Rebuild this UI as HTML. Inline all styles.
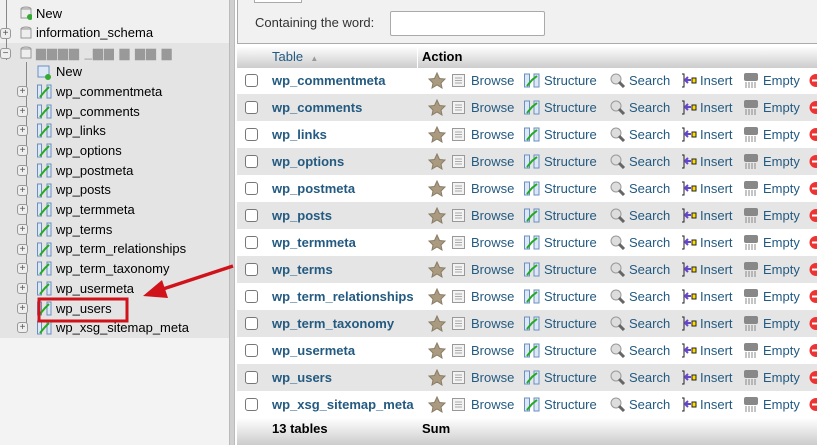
<!DOCTYPE html><html><head><style>
*{margin:0;padding:0;box-sizing:border-box}
body{width:817px;height:445px;overflow:hidden;font-family:"Liberation Sans",Arial,sans-serif;font-size:13px;position:relative;background:#fff}
#left{position:absolute;left:0;top:0;width:229px;height:445px;background:#f3f3f3}
#left .db{position:absolute;left:0;top:43px;width:229px;height:295px;background:#e4e4e4}
#left .top{position:absolute;left:0;top:0;width:229px;height:43px;background:#f0f0f0}
.li{position:absolute;font-size:13px;color:#000;white-space:nowrap}
.vl{position:absolute;border-left:1px solid #888}
.pl{position:absolute;width:11px;height:11px;border:1px solid #999;border-radius:3px;background:#eee;font-size:10px;line-height:9px;text-align:center;color:#555}
.ic{position:absolute;width:12px;height:13px}
#div{position:absolute;left:229px;top:0;width:6px;height:445px;background:#d0d0d0;border-left:1px solid #bbb;border-right:1px solid #bbb}
#right{position:absolute;left:235px;top:0;width:582px;height:445px;background:#fff}
.filt{position:absolute;left:2px;top:-2px;width:600px;height:46px;background:#f1f1f1;border:1px solid #aaa}
.row{position:absolute;left:2px;width:600px;height:27px}
.g{background:#e5e5e5}
.cb{position:absolute;left:8px;top:7px;width:13px;height:13px;border:1px solid #777;border-radius:3px;background:#fff}
.tn{position:absolute;left:35px;top:6px;color:#235a81;font-weight:bold;font-size:13px}
.a{position:absolute;top:6px;color:#235a81;font-size:13px}
.hdr{position:absolute;left:2px;top:46px;width:600px;height:22px;background:linear-gradient(#fff,#ccc)}
.ftr{position:absolute;left:2px;top:418px;width:600px;height:27px;background:linear-gradient(#fff,#ccc)}
</style></head><body>
<div id="left"><div class="top"></div><div class="db"></div>
<div class="vl" style="left:6px;top:0;height:60px"></div>
<div class="vl" style="left:26px;top:62px;height:270px"></div>
<div class="li" style="left:36px;top:6px">New</div>
<div class="li" style="left:36px;top:25px">information_schema</div>
<div class="li" style="left:36px;top:45px;color:#999;letter-spacing:1px">▆▆▆▆ _▆▆ ▆ ▆▆ ▆</div>
<div class="pl" style="left:0;top:28px">+</div><div class="pl" style="left:0;top:48px">−</div>
<svg style="position:absolute;left:20px;top:6px" width="12" height="14"><ellipse cx="6" cy="3" rx="5" ry="2" fill="#ddd" stroke="#999"/><rect x="1" y="3" width="10" height="9" fill="#eee" stroke="#999"/><circle cx="10" cy="11" r="3" fill="#3a3"/></svg>
<svg style="position:absolute;left:20px;top:26px" width="12" height="14"><ellipse cx="6" cy="3" rx="5" ry="2" fill="#ddd" stroke="#999"/><rect x="1" y="3" width="10" height="9" fill="#eee" stroke="#999"/></svg>
<svg style="position:absolute;left:20px;top:46px" width="12" height="14"><ellipse cx="6" cy="3" rx="5" ry="2" fill="#ddd" stroke="#999"/><rect x="1" y="3" width="10" height="9" fill="#eee" stroke="#999"/></svg>
<svg style="position:absolute;left:37px;top:65px" width="14" height="15"><rect x="1" y="1" width="11" height="11" fill="#dde8f6" stroke="#6b8ec0"/><circle cx="11" cy="12" r="3" fill="#3a3"/></svg>
<div class="li" style="left:56px;top:64px">New</div>
<div class="li" style="left:56px;top:84px">wp_commentmeta</div>
<div class="li" style="left:56px;top:104px">wp_comments</div>
<div class="li" style="left:56px;top:123px">wp_links</div>
<div class="li" style="left:56px;top:143px">wp_options</div>
<div class="li" style="left:56px;top:163px">wp_postmeta</div>
<div class="li" style="left:56px;top:182px">wp_posts</div>
<div class="li" style="left:56px;top:202px">wp_termmeta</div>
<div class="li" style="left:56px;top:222px">wp_terms</div>
<div class="li" style="left:56px;top:241px">wp_term_relationships</div>
<div class="li" style="left:56px;top:261px">wp_term_taxonomy</div>
<div class="li" style="left:56px;top:281px">wp_usermeta</div>
<div class="li" style="left:56px;top:301px">wp_users</div>
<div class="li" style="left:56px;top:320px">wp_xsg_sitemap_meta</div>
<div id="pls"></div>
</div>
<div id="div"></div>
<div id="right">
<div class="filt"><div style="position:absolute;left:17px;top:16px;color:#333">Containing the word:</div><div style="position:absolute;left:152px;top:12px;width:155px;height:25px;background:#fff;border:1px solid #aaa;border-radius:2px"></div><div style="position:absolute;left:16px;top:-2px;width:48px;height:6px;background:#fff;border:1px solid #aaa"></div></div>
<div class="hdr"><span style="position:absolute;left:35px;top:3px;color:#235a81">Table &nbsp;<span style="font-size:8px;color:#999">▲</span></span><span style="position:absolute;left:180px;top:0;width:1px;height:22px;background:#fff"></span><span style="position:absolute;left:185px;top:3px;font-weight:bold">Action</span></div>
<div id="rows"></div>
<div class="ftr"><span style="position:absolute;left:35px;top:3px;font-weight:bold">13 tables</span><span style="position:absolute;left:185px;top:3px;font-weight:bold">Sum</span></div>
</div>
<svg style="position:absolute;left:0;top:0" width="817" height="445"><rect x="39" y="299" width="88" height="22" fill="none" stroke="#d0121b" stroke-width="3"/><line x1="233" y1="266" x2="160" y2="290" stroke="#d0121b" stroke-width="3.5"/><polygon points="143,296 162,280 168,298" fill="#d0121b"/></svg>
<script>
var n=["wp_commentmeta","wp_comments","wp_links","wp_options","wp_postmeta","wp_posts","wp_termmeta","wp_terms","wp_term_relationships","wp_term_taxonomy","wp_usermeta","wp_users","wp_xsg_sitemap_meta"],h="",p="";
var ic='<svg style="position:absolute;left:191px;top:5px" width="18" height="17"><polygon points="9,1 11.5,6.5 17,7 13,11 14,16 9,13 4,16 5,11 1,7 6.5,6.5" fill="#a99a80" stroke="#8a7c66"/></svg>'+
'<svg style="position:absolute;left:215px;top:7px" width="14" height="14"><rect x="0.5" y="0.5" width="12" height="12" fill="#f3f3f3" stroke="#999"/><path d="M3 4H10M3 6.5H10M3 9H10" stroke="#aaa"/></svg><span class="a" style="left:234px">Browse</span>'+
'<svg style="position:absolute;left:287px;top:6px" width="16" height="15"><rect x="0.5" y="1" width="5" height="13" fill="#dde8f6" stroke="#6b8ec0"/><rect x="10" y="1" width="5" height="13" fill="#dde8f6" stroke="#6b8ec0"/><path d="M3 13L8 7L13 3" stroke="#2a2" stroke-width="2" fill="none"/></svg><span class="a" style="left:307px">Structure</span>'+
'<svg style="position:absolute;left:373px;top:6px" width="16" height="15"><circle cx="6" cy="6" r="5" fill="#ddd" stroke="#999"/><path d="M9 9L14 14" stroke="#666" stroke-width="3"/></svg><span class="a" style="left:392px">Search</span>'+
'<svg style="position:absolute;left:444px;top:6px" width="16" height="15"><path d="M1 1H3V14H1" stroke="#222" fill="none"/><path d="M4 7H10M4 7L7 4M4 7L7 10" stroke="#64c" stroke-width="2" fill="none"/><rect x="11" y="5" width="4" height="5" fill="#fd0" stroke="#222"/></svg><span class="a" style="left:463px">Insert</span>'+
'<svg style="position:absolute;left:506px;top:5px" width="16" height="17"><rect x="1" y="1" width="14" height="8" rx="2" fill="#888"/><path d="M3 10V16M6 10V16M9 10V16M12 10V16" stroke="#888"/></svg><span class="a" style="left:526px">Empty</span>'+
'<svg style="position:absolute;left:572px;top:6px" width="14" height="15"><circle cx="7" cy="7.5" r="6.5" fill="#e33"/><rect x="3" y="6.5" width="8" height="2" fill="#fff"/></svg>';
for(var i=0;i<13;i++){h+='<div class="row'+(i%2?' g':'')+'" style="top:'+(67+27*i)+'px"><div class="cb"></div><span class="tn">'+n[i]+'</span>'+ic+'</div>';
var y=86+19.7*i;p+='<div class="pl" style="left:17px;top:'+y+'px">+</div><svg style="position:absolute;left:37px;top:'+(y-2)+'px" width="15" height="15"><rect x="0.5" y="1" width="4" height="13" fill="#dde8f6" stroke="#6b8ec0"/><rect x="10" y="1" width="4" height="13" fill="#dde8f6" stroke="#6b8ec0"/><path d="M3 13L8 7L12 3" stroke="#2a2" stroke-width="2" fill="none"/></svg>';}
document.getElementById("rows").innerHTML=h;document.getElementById("pls").innerHTML=p;
</script>
</body></html>
